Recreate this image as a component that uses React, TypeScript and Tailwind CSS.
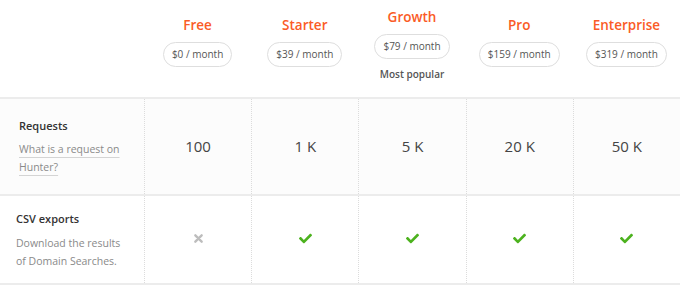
import React from 'react';
import { FaCheck } from 'react-icons/fa';

const plans = [
	{ name: 'Free', price: '$0 / month', requests: '100', csv: false },
	{ name: 'Starter', price: '$39 / month', requests: '1 K', csv: true },
	{ name: 'Growth', price: '$79 / month', requests: '5 K', csv: true, popular: true },
	{ name: 'Pro', price: '$159 / month', requests: '20 K', csv: true },
	{ name: 'Enterprise', price: '$319 / month', requests: '50 K', csv: true },
];

const grid = 'grid grid-cols-[144px_repeat(5,minmax(0,1fr))]';

export default function App() {
	return (
		<div className="w-[695px] h-[287px] bg-white font-['Open_Sans',sans-serif]">
			<div className="w-[680px]">
				{/* Plan header */}
				<div className={`${grid} h-[97px]`}>
					<div />
					{plans.map(plan => (
						<div key={plan.name} className={`flex flex-col items-center ${plan.popular ? 'pt-[7px]' : 'pt-[15px]'}`}>
							<div className="text-[13.5px] leading-[20px] font-semibold text-[#fa5b26]">{plan.name}</div>
							<div className="mt-[7px] h-[25px] px-[8px] flex items-center rounded-full border border-[#dedede] text-[10px] text-[#555]">
								{plan.price}
							</div>
							{plan.popular && (
								<div className="mt-[8px] text-[10px] leading-[14px] font-semibold text-[#555]">Most popular</div>
							)}
						</div>
					))}
				</div>

				{/* Requests */}
				<div className={`${grid} h-[97px] border-t-2 border-[#ececec] bg-[#fcfcfc]`}>
					<div className="flex flex-col justify-center pl-[19px]">
						<div className="text-[11px] leading-[18px] font-semibold text-[#333]">Requests</div>
						<div className="mt-[5px] text-[10.5px] leading-[18px] text-[#8a8a8a] underline decoration-[#d4d4d4] underline-offset-[4px]">
							What is a request on<br />Hunter?
						</div>
					</div>
					{plans.map(plan => (
						<div key={plan.name} className="flex items-center justify-center border-l border-dotted border-[#dcdcdc] text-[15px] text-[#444]">
							{plan.requests}
						</div>
					))}
				</div>

				{/* CSV exports */}
				<div className={`${grid} h-[91px] border-y-2 border-[#ececec]`}>
					<div className="flex flex-col justify-center pl-[16px]">
						<div className="text-[11px] leading-[18px] font-semibold text-[#333]">CSV exports</div>
						<div className="mt-[6px] text-[10.5px] leading-[18px] text-[#8a8a8a]">
							Download the results<br />of Domain Searches.
						</div>
					</div>
					{plans.map(plan => (
						<div key={plan.name} className="flex items-center justify-center border-l border-dotted border-[#dcdcdc] pb-[2px]">
							{plan.csv ? (
								<FaCheck className="w-[13px] h-[13px] text-[#4cb21e]" />
							) : (
								<svg viewBox="0 0 10 10" className="w-[9px] h-[9px]">
									<path d="M1.5 1.5L8.5 8.5M8.5 1.5L1.5 8.5" stroke="#bdbdbd" strokeWidth="2.6" strokeLinecap="round" />
								</svg>
							)}
						</div>
					))}
				</div>
			</div>
		</div>
	);
}
